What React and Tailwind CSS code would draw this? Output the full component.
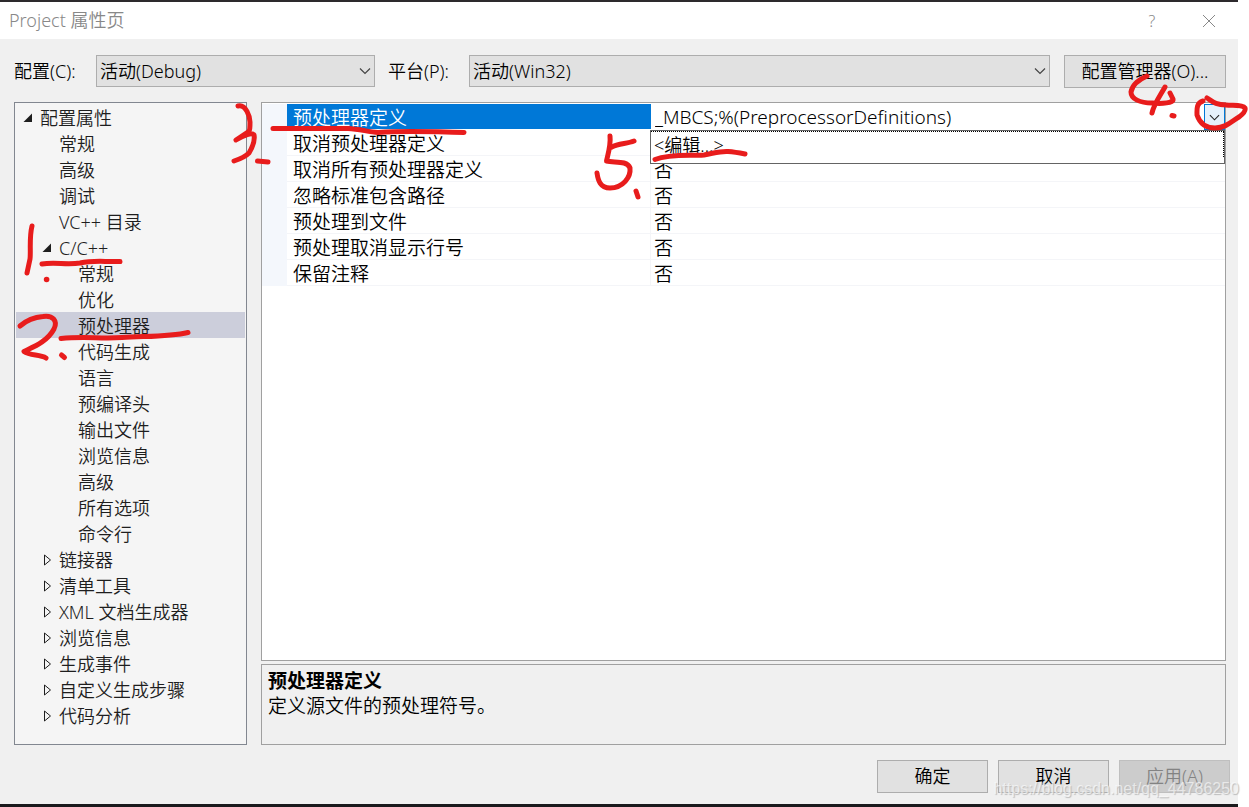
import { useState } from 'react';

const treeItems = [
  { label: '配置属性', level: 0, state: 'open' },
  { label: '常规', level: 1 },
  { label: '高级', level: 1 },
  { label: '调试', level: 1 },
  { label: 'VC++ 目录', level: 1 },
  { label: 'C/C++', level: 1, state: 'open' },
  { label: '常规', level: 2 },
  { label: '优化', level: 2 },
  { label: '预处理器', level: 2 },
  { label: '代码生成', level: 2 },
  { label: '语言', level: 2 },
  { label: '预编译头', level: 2 },
  { label: '输出文件', level: 2 },
  { label: '浏览信息', level: 2 },
  { label: '高级', level: 2 },
  { label: '所有选项', level: 2 },
  { label: '命令行', level: 2 },
  { label: '链接器', level: 1, state: 'closed' },
  { label: '清单工具', level: 1, state: 'closed' },
  { label: 'XML 文档生成器', level: 1, state: 'closed' },
  { label: '浏览信息', level: 1, state: 'closed' },
  { label: '生成事件', level: 1, state: 'closed' },
  { label: '自定义生成步骤', level: 1, state: 'closed' },
  { label: '代码分析', level: 1, state: 'closed' }
];

const indents = ['pl-[6px]', 'pl-[25px]', 'pl-[44px]'];

const properties = [
  { name: '取消预处理器定义', value: '' },
  { name: '取消所有预处理器定义', value: '否' },
  { name: '忽略标准包含路径', value: '否' },
  { name: '预处理到文件', value: '否' },
  { name: '预处理取消显示行号', value: '否' },
  { name: '保留注释', value: '否' }
];

const Chevron = ({ className }) => (
  <svg viewBox="0 0 12 12" className={className} fill="none" stroke="currentColor" strokeWidth="1.2" aria-hidden="true">
    <path d="M1 3.5 L6 8.5 L11 3.5" />
  </svg>
);

const Expander = ({ state }) => (
  <svg viewBox="0 0 10 12" className="w-[10px] h-3" aria-hidden="true">
    {state === 'open'
      ? <path d="M9 1.5 V10 H0.5 Z" fill="#1e1e1e" />
      : <path d="M2.5 1 V11 L8.5 6 Z" fill="none" stroke="#1e1e1e" />}
  </svg>
);

const SelectBox = ({ id, options, className }) => (
  <div className={`relative h-8 ${className}`}>
    <select
      id={id}
      className="w-full h-full appearance-none border border-[#adadad] bg-[#e1e1e1] pl-[3px] pr-8 text-black leading-[30px]"
    >
      {options.map(option => (
        <option key={option}>{option}</option>
      ))}
    </select>
    <Chevron className="absolute right-1 top-[10px] w-3 h-3 text-[#444] pointer-events-none" />
  </div>
);

// Hand-drawn numbered notes on top of the dialog
const Notes = () => (
  <svg
    width="1249"
    height="807"
    viewBox="0 0 1249 807"
    className="absolute left-0 top-0 max-w-none pointer-events-none"
    fill="none"
    stroke="#e81c1c"
    strokeWidth="5"
    strokeLinecap="round"
    strokeLinejoin="round"
    aria-hidden="true"
  >
    <path d="M32 226 C29 238 31 252 30 259 L27 273" />
    <path d="M46.5 279.5 h0.2" strokeWidth="5.4" />
    <path d="M42 264 C54 262 68 265 80 263 C94 260 104 262 120 261.5" />

    <path d="M20 326 C28 319 36 317 43 316.500 C53 315 58 321 54 329 C47 342 33 347 24 351.500 C30 356 40 354 46 358" />
    <path d="M61.500 355 L64.500 357.500" />
    <path d="M61 338.500 C85 336 100 339 122 337.500 C145 336 169 337 188 332.500" />

    <path d="M238 106 C246 104 250 117 250 122 C250 127 250 131 248 132 L236 140 C244 135 252 132 254 135 C255 140 252 148 249 153 C245 157 240 159 234 161" />
    <path d="M257.500 161 L268 162" />
    <path d="M273 128.500 H348 C360 129 368 132 378 132.500 C410 130 430 132 464 132.500" />

    <path d="M1147 76 C1138 80 1132 86 1131 92 C1131 99 1140 103 1152 103 C1162 104 1174 103 1173 99 L1170 93" />
    <path d="M1165 87 C1160 96 1154 104 1152 113" />
    <path d="M1172 115.500 L1174 116" />
    <path d="M1203 101 C1196 103 1197 110 1197 115 C1199 121 1204 128 1215 128 C1226 128 1232 121 1239 117 C1243 114 1246 111 1245 108 C1242 104 1232 106 1226 105 C1216 105 1213 102 1207 98" />

    <path d="M610 136 C611 145 608 154 606.500 161 C614 163 627 160 630 168 C631 177 623 188 610 188 C600 188 598 180 597 173" />
    <path d="M612 147 C618 143 627 144 634 141" />
    <path d="M636 191 L638 197" />
    <path d="M655 159.500 C670 154 688 156 704 155 C715 153 720 151 728 151.500 C735 152 740 153 745 154" />
  </svg>
);

const App = () => {
  const [selected, setSelected] = useState(8);
  const [definitions, setDefinitions] = useState('_MBCS;%(PreprocessorDefinitions)');

  return (
    <div className="relative bg-white pr-[11px] text-[18px] font-[350] text-black font-['Noto_Sans','Noto_Sans_CJK_SC',sans-serif] overflow-x-hidden">
      <div className="border-t-2 border-b-[3px] border-t-[#2d2a2d] border-b-[#1a1a1c] bg-[#f0f0f0]">
        <header className="flex h-[37px] items-center justify-between bg-white pl-[9px] pr-[22px] text-[#888]">
          <h1 className="font-[350]">Project 属性页</h1>
          <div className="flex items-center gap-[43px]">
            <button type="button" aria-label="帮助" className="w-[14px] text-base">?</button>
            <button type="button" aria-label="关闭">
              <svg viewBox="0 0 14 14" className="w-[14px] h-[14px]" stroke="currentColor" strokeWidth="1">
                <path d="M1 1 L13 13 M13 1 L1 13" />
              </svg>
            </button>
          </div>
        </header>

        <main className="pl-[14px] pr-3 pt-4 pb-[11px]">
          <div className="flex items-start">
            <label htmlFor="config" className="w-[82px] leading-8">配置(C):</label>
            <SelectBox id="config" options={['活动(Debug)']} className="w-[279px]" />
            <label htmlFor="platform" className="ml-[13px] w-[81px] leading-8">平台(P):</label>
            <SelectBox id="platform" options={['活动(Win32)']} className="flex-1" />
            <button type="button" className="ml-[14px] h-[33px] w-[162px] border border-[#adadad] bg-[#e1e1e1]">
              配置管理器(O)...
            </button>
          </div>

          <div className="mt-[14px] flex gap-[14px]">
            <ul role="tree" className="w-[233px] shrink-0 border border-[#828790] bg-[#f5f5f5] px-px pt-px pb-4 text-[#1e1e1e]">
              {treeItems.map((item, i) => (
                <li
                  key={i}
                  role="treeitem"
                  aria-selected={i === selected}
                  onClick={() => setSelected(i)}
                  className={`flex h-[26px] items-center whitespace-nowrap pt-[2px] ${indents[item.level]} ${i === selected ? 'bg-[#cccedb]' : ''}`}
                >
                  <span className="w-[18px] pl-px">
                    {item.state && <Expander state={item.state} />}
                  </span>
                  {item.label}
                </li>
              ))}
            </ul>

            <div className="flex min-w-0 flex-1 flex-col gap-[3px]">
              <div className="flex-1 border border-[#a0a0a0] bg-white pt-px text-[19px] leading-[22px]">
                <table className="w-full table-fixed border-separate border-spacing-0">
                  <colgroup>
                    <col className="w-[25px]" />
                    <col className="w-[364px]" />
                    <col />
                  </colgroup>
                  <tbody>
                    <tr className="h-[26px]">
                      <td className="bg-[#f4f7fc] p-0"></td>
                      <th scope="row" className="border-b border-white bg-[#0078d7] pt-[3px] pb-0 pl-[6px] text-left font-[350] text-white">
                        预处理器定义
                      </th>
                      <td className="relative p-0">
                        <div className="flex h-[26px]">
                          <input
                            aria-label="预处理器定义"
                            value={definitions}
                            onChange={(e) => setDefinitions(e.target.value)}
                            className="min-w-0 flex-1 pl-1 text-[19px] font-light outline-none"
                          />
                          <button
                            type="button"
                            aria-label="展开"
                            className="flex w-[21px] items-center justify-center border border-[#0078d7] bg-[#e5f1fb]"
                          >
                            <Chevron className="w-[11px] h-[11px] text-[#222]" />
                          </button>
                        </div>
                        <div className="absolute -left-px right-0 top-[26px] h-[34px] border border-[#646464] bg-white">
                          <button
                            type="button"
                            className="block h-[26px] w-full border-t border-r border-dotted border-black pl-[3px] text-left text-[18px]"
                          >
                            &lt;编辑...&gt;
                          </button>
                        </div>
                      </td>
                    </tr>
                    {properties.map(({ name, value }) => (
                      <tr key={name} className="h-[26px]">
                        <td className="bg-[#f4f7fc] p-0"></td>
                        <th scope="row" className="border-b border-r border-[#f4f5f8] pt-[3px] pb-0 pl-[6px] text-left font-[350]">
                          {name}
                        </th>
                        <td className="border-b border-[#f4f5f8] pt-[3px] pb-0 pl-[3px]">{value}</td>
                      </tr>
                    ))}
                  </tbody>
                </table>
              </div>

              <section className="h-[81px] border border-[#a0a0a0] px-[6px] py-1 text-[19px] leading-[25px]">
                <h2 className="font-bold">预处理器定义</h2>
                <p>定义源文件的预处理符号。</p>
              </section>
            </div>
          </div>

          <footer className="mt-[15px] -mr-1 flex justify-end gap-[10px]">
            <button type="button" className="h-[33px] w-[111px] border border-[#adadad] bg-[#e1e1e1]">确定</button>
            <button type="button" className="h-[33px] w-[111px] border border-[#adadad] bg-[#e1e1e1]">取消</button>
            <button type="button" disabled className="h-[33px] w-[111px] border border-[#bfbfbf] bg-[#cccccc] text-[#838383]">
              应用(A)
            </button>
          </footer>
        </main>
      </div>

      <Notes />
      <span className="absolute bottom-[6px] right-[10px] font-['Liberation_Sans',sans-serif] text-base font-normal text-white/60 text-shadow-[1px_1px_1px_#bbbbbb]">
        https://blog.csdn.net/qq_44786250
      </span>
    </div>
  );
};

export default App;
